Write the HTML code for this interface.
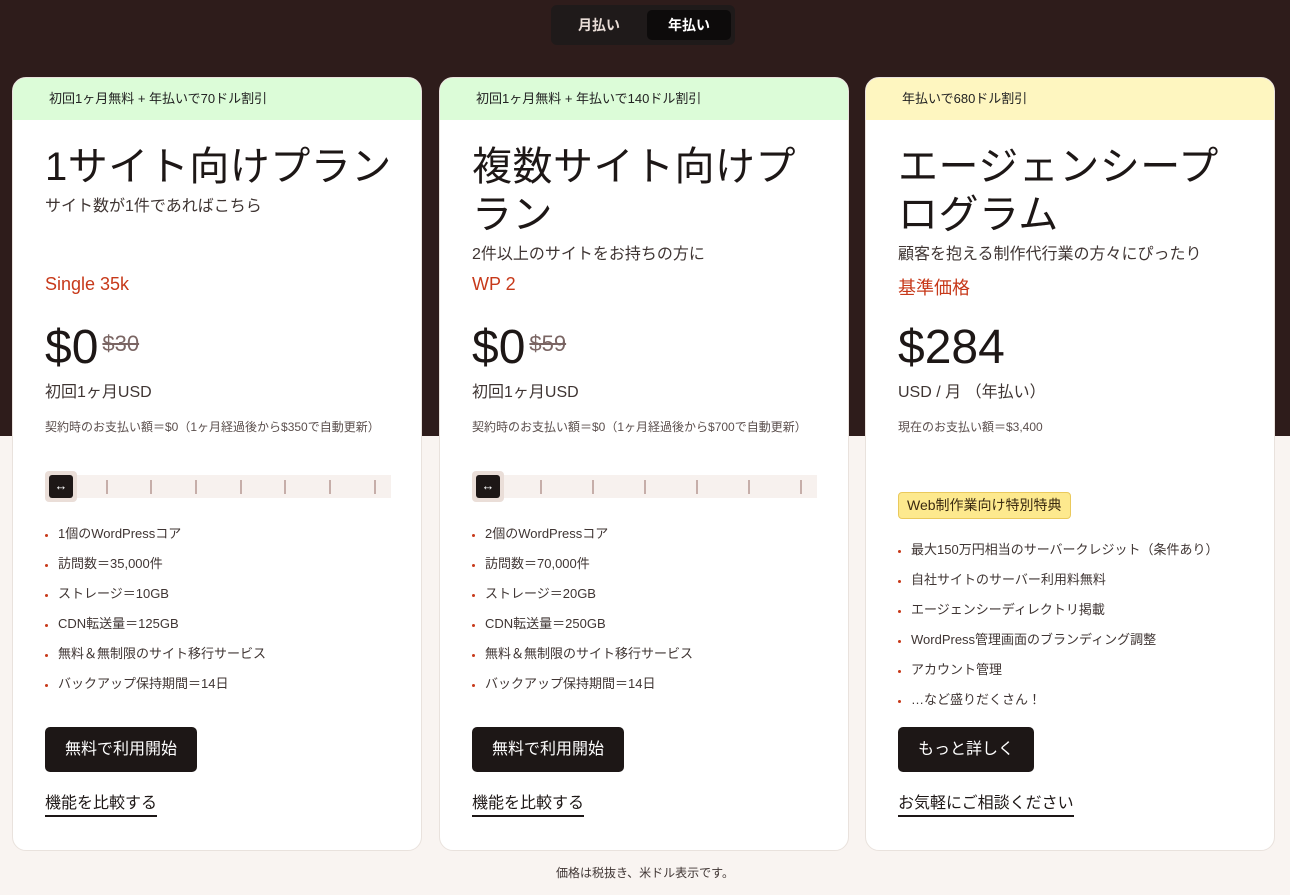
<!DOCTYPE html>
<html><head><meta charset="utf-8"><style>
*{margin:0;padding:0;box-sizing:border-box}
body{width:1290px;height:895px;position:relative;overflow:hidden;background:#f9f4f1;font-family:"Liberation Sans","Noto Sans CJK JP",sans-serif;color:#1d1716}
.top{position:absolute;left:0;top:0;width:1290px;height:436px;background:#2e1c1b}
.tog{position:absolute;left:551px;top:5px;width:184px;height:40px;background:#1f1a1a;border-radius:6px}
.tog span{position:absolute;top:5px;height:30px;line-height:30px;font-size:14px;font-weight:bold;text-align:center}
.card{position:absolute;top:77px;width:410px;height:774px;background:#fff;border-radius:14px;border:1px solid #e9e2dd;overflow:hidden}
.band{height:42px;line-height:42px;padding-left:36px;font-size:13px;color:#222}
.a{position:absolute;left:32px;white-space:nowrap}
.title{font-size:40px;line-height:48px;color:#1d1716;letter-spacing:0.5px}
.sub{font-size:16px;color:#3f3533}
.red{font-size:18px;color:#c7391a}
.price{font-size:48px;line-height:56px;color:#1d1716}
.old{font-size:22px;color:#7a6563;text-decoration:line-through;margin-left:4px;position:relative;top:-12px}
.usd{font-size:16px;color:#3f3533}
.note{font-size:12px;color:#5b4f4d}
.track{position:absolute;left:33px;top:397px;height:23px;background:#f7f1ee}
.thumb{position:absolute;left:32px;top:393px;width:32px;height:31px;background:#eaded8;border-radius:4px}
.thumb i{position:absolute;left:4px;top:4px;width:24px;height:23px;background:#1d1716;border-radius:3px;color:#fff;font-style:normal;font-size:13px;text-align:center;line-height:22px}
.tick{position:absolute;top:402px;width:2px;height:14px;background:#c6aea9}
ul{position:absolute;left:32px;list-style:none}
li{font-size:13px;color:#3f3533;height:30px;line-height:30px;position:relative;padding-left:13px}
li:before{content:"";position:absolute;left:0;top:15px;width:3px;height:3px;border-radius:50%;background:#c7391a}
.btn{position:absolute;left:32px;top:649px;height:45px;background:#1d1716;color:#fff;font-size:16px;line-height:45px;padding:0 20px;border-radius:5px}
.lnk{position:absolute;left:32px;top:715px;font-size:16px;border-bottom:2px solid #1d1716;line-height:22px}
.badge{position:absolute;left:32px;top:414px;height:27px;line-height:25px;background:#fde98e;border:1px solid #eac95c;border-radius:4px;padding:0 8px;font-size:14px;color:#3a2a10}
.foot{position:absolute;left:0;width:1290px;top:864px;text-align:center;font-size:12px;color:#3f3533}
</style></head><body>
<div class="top"></div>
<div class="tog"><span style="left:8px;width:80px;color:#e8dcd6">月払い</span><span style="left:96px;width:84px;background:#0d0b0b;color:#fff;border-radius:5px">年払い</span></div>

<div class="card" style="left:12px">
<div class="band" style="background:#dcfcd8">初回1ヶ月無料 + 年払いで70ドル割引</div>
<div class="a title" style="top:65px">1サイト向けプラン</div>
<div class="a sub" style="top:114px">サイト数が1件であればこちら</div>
<div class="a red" style="top:196px">Single 35k</div>
<div class="a price" style="top:242px">$0<span class="old">$30</span></div>
<div class="a usd" style="top:300px">初回1ヶ月USD</div>
<div class="a note" style="top:340px">契約時のお支払い額＝$0（1ヶ月経過後から$350で自動更新）</div>
<div class="track" style="width:345px"></div>
<div class="tick" style="left:93px"></div><div class="tick" style="left:137px"></div><div class="tick" style="left:182px"></div><div class="tick" style="left:227px"></div><div class="tick" style="left:271px"></div><div class="tick" style="left:316px"></div><div class="tick" style="left:361px"></div>
<div class="thumb"><i>↔</i></div>
<ul style="top:441px"><li>1個のWordPressコア</li><li>訪問数＝35,000件</li><li>ストレージ＝10GB</li><li>CDN転送量＝125GB</li><li>無料＆無制限のサイト移行サービス</li><li>バックアップ保持期間＝14日</li></ul>
<div class="btn">無料で利用開始</div>
<div class="lnk">機能を比較する</div>
</div>

<div class="card" style="left:439px">
<div class="band" style="background:#dcfcd8">初回1ヶ月無料 + 年払いで140ドル割引</div>
<div class="a title" style="top:65px">複数サイト向けプ<br>ラン</div>
<div class="a sub" style="top:162px">2件以上のサイトをお持ちの方に</div>
<div class="a red" style="top:196px">WP 2</div>
<div class="a price" style="top:242px">$0<span class="old">$59</span></div>
<div class="a usd" style="top:300px">初回1ヶ月USD</div>
<div class="a note" style="top:340px">契約時のお支払い額＝$0（1ヶ月経過後から$700で自動更新）</div>
<div class="track" style="width:344px"></div>
<div class="tick" style="left:100px"></div><div class="tick" style="left:152px"></div><div class="tick" style="left:204px"></div><div class="tick" style="left:256px"></div><div class="tick" style="left:308px"></div><div class="tick" style="left:360px"></div>
<div class="thumb"><i>↔</i></div>
<ul style="top:441px"><li>2個のWordPressコア</li><li>訪問数＝70,000件</li><li>ストレージ＝20GB</li><li>CDN転送量＝250GB</li><li>無料＆無制限のサイト移行サービス</li><li>バックアップ保持期間＝14日</li></ul>
<div class="btn">無料で利用開始</div>
<div class="lnk">機能を比較する</div>
</div>

<div class="card" style="left:865px">
<div class="band" style="background:#fef6c0">年払いで680ドル割引</div>
<div class="a title" style="top:65px">エージェンシープ<br>ログラム</div>
<div class="a sub" style="top:162px">顧客を抱える制作代行業の方々にぴったり</div>
<div class="a red" style="top:196px">基準価格</div>
<div class="a price" style="top:242px">$284</div>
<div class="a usd" style="top:300px">USD / 月 （年払い）</div>
<div class="a note" style="top:340px">現在のお支払い額＝$3,400</div>
<div class="badge">Web制作業向け特別特典</div>
<ul style="top:457px"><li>最大150万円相当のサーバークレジット（条件あり）</li><li>自社サイトのサーバー利用料無料</li><li>エージェンシーディレクトリ掲載</li><li>WordPress管理画面のブランディング調整</li><li>アカウント管理</li><li>…など盛りだくさん！</li></ul>
<div class="btn">もっと詳しく</div>
<div class="lnk">お気軽にご相談ください</div>
</div>

<div class="foot">価格は税抜き、米ドル表示です。</div>
</body></html>
